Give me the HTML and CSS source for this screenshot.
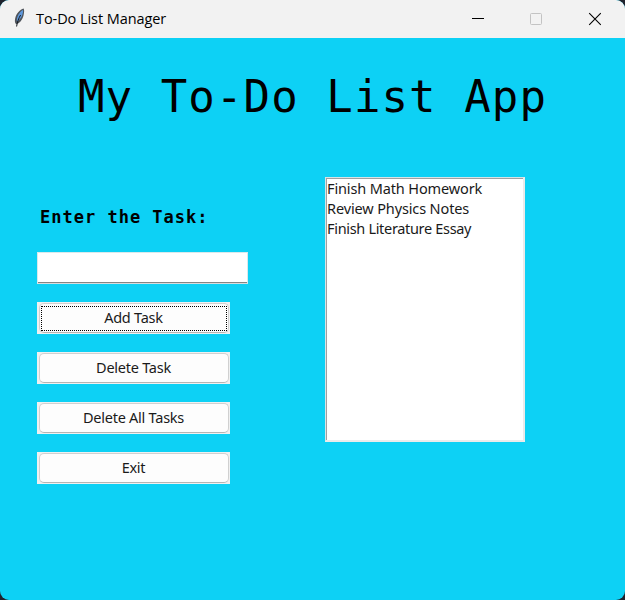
FILE: index.html
```html
<!DOCTYPE html>
<html lang="en">
<head>
<meta charset="utf-8">
<title>To-Do List Manager</title>
<link rel="stylesheet" href="styles.css">
</head>
<body>
<div class="window">
  <header class="titlebar">
    <svg class="feather" width="14" height="20" viewBox="0 0 14 20">
      <path d="M10.600 .600C7 1.400 3.400 5.800 2.200 10.200c-.6 2.500-.3 4 .3 5.300l1.200.8c3-1.200 5.600-4.300 6.700-8.300.8-3 1.100-6 .2-7.400z" fill="#50555c"/>
      <path d="M10 2C7.400 3.200 4.700 7 4 10.600c-.3 1.200-.2 2.400 0 3.200 2.200-1.600 4.400-4 5.400-7.100.6-2 .9-3.700.6-4.700z" fill="#5f98dc"/>
      <path d="M7.600 7C5.800 10 4.200 14 3.600 18.500" fill="none" stroke="#16191e" stroke-width="1"/>
    </svg>
    <span class="caption">To-Do List Manager</span>
    <div class="controls">
      <svg width="60" height="38" viewBox="0 0 60 38"><path d="M13 18.500h12" stroke="#000"/></svg>
      <svg width="58" height="38" viewBox="0 0 58 38"><rect x="11.500" y="13.500" width="11" height="11" rx="1" fill="none" stroke="#c3c3c3"/></svg>
      <svg width="48" height="38" viewBox="0 0 48 38"><path d="M12.200 13.200l11.600 11.600M23.800 13.200L12.200 24.800" stroke="#000" stroke-width="1.100"/></svg>
    </div>
  </header>
  <main class="content">
    <h1 class="heading">My To-Do List App</h1>
    <div class="columns">
      <form class="form">
        <label class="label" for="task">Enter the Task:</label>
        <input class="entry" id="task" type="text">
        <button class="button focused" type="button"><span class="face">Add Task</span></button>
        <button class="button" type="button"><span class="face">Delete Task</span></button>
        <button class="button" type="button"><span class="face">Delete All Tasks</span></button>
        <button class="button" type="button"><span class="face">Exit</span></button>
      </form>
      <ul class="list">
        <li>Finish Math Homework</li>
        <li>Review Physics Notes</li>
        <li class="tight">Finish Literature Essay</li>
      </ul>
    </div>
  </main>
</div>
</body>
</html>
```
FILE: styles.css
```css
* { box-sizing: border-box; }
html { background: #20222d; }
body { margin: 0; font-family: "Noto Sans", sans-serif; }
.window {
  width: 625px;
  height: 600px;
  overflow: hidden;
  border-radius: 9px;
  background: #0dd1f5;
}
.titlebar {
  display: flex;
  align-items: center;
  height: 38px;
  padding-left: 13px;
  background: #f2f2f2;
}
.feather { flex: none; margin-top: -2px; }
.caption {
  margin-left: 9px;
  font-family: "Open Sans", sans-serif;
  font-size: 14.5px;
  letter-spacing: -0.07px;
  line-height: 20px;
  color: #000;
  white-space: nowrap;
}
.controls { display: flex; height: 38px; margin-left: auto; }
.heading {
  margin: 0;
  padding: 29px 0 0 78px;
  font-family: "DejaVu Sans Mono", monospace;
  font-size: 44px;
  font-weight: 400;
  line-height: 60px;
  letter-spacing: 1.1px;
  white-space: nowrap;
  color: #000;
}
.columns { display: flex; align-items: flex-start; padding: 50px 0 0 37px; }
.form { display: flex; flex-direction: column; width: 288px; padding-top: 30px; }
.label {
  height: 20px;
  margin-left: 3px;
  font: 700 17px/20px "DejaVu Sans Mono", monospace;
  letter-spacing: 1px;
  color: #000;
  white-space: nowrap;
}
.entry {
  width: 211px;
  height: 32px;
  margin: 25px 0 18px;
  padding: 2px 6px;
  border: 1px solid #d9e9ec;
  border-bottom: 1px solid #d8dcdd;
  border-radius: 0;
  outline: 0;
  background: #fff;
  box-shadow: inset 0 -1px #858585;
}
.button {
  display: flex;
  width: 193px;
  height: 32px;
  margin: 0 0 18px;
  padding: 1px 1px 1px 2px;
  border: 0;
  background: #f0f0f0;
}
.face {
  display: flex;
  align-items: center;
  justify-content: center;
  width: 190px;
  height: 30px;
  padding-right: 1px;
  padding-bottom: 3px;
  border: 1px solid #d0d0d0;
  border-bottom-color: #b5b5b5;
  border-radius: 5px;
  background: #fdfdfd;
  font: 14.5px/20px "Noto Sans", sans-serif;
  letter-spacing: -0.25px;
  color: #1a1a1a;
}
.focused .face { position: relative; }
.focused .face::after {
  content: "";
  position: absolute;
  inset: 2px 1px 1px;
  border: 1px dotted #000;
}
.list {
  width: 200px;
  height: 265px;
  margin: 0;
  padding: 0;
  list-style: none;
  border: 1px solid #d8e4e6;
  border-right: 2px solid #ebebeb;
  border-bottom: 2px solid #ebebeb;
  background: #fff;
  box-shadow: inset 1px 1px #a0a0a0;
  font-size: 14.5px;
  line-height: 20px;
  letter-spacing: -0.13px;
  white-space: nowrap;
  color: #1a1a1a;
}
.list li { height: 20px; padding-left: 1px; }
.list .tight { letter-spacing: -0.32px; }
```
